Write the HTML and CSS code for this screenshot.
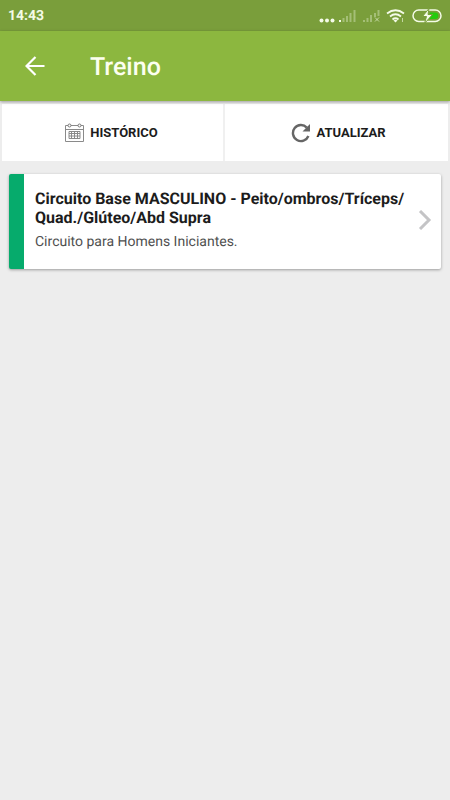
FILE: index.html
```html
<!DOCTYPE html>
<html lang="pt-BR">
<head>
<meta charset="utf-8">
<meta name="viewport" content="width=device-width, initial-scale=1">
<title>Treino</title>
<link rel="stylesheet" href="styles.css">
</head>
<body>
<div class="status">
  <time class="clock">14:43</time>
  <svg class="status-icons" width="124" height="20" viewBox="0 0 124 20" fill="#f4fbe8" aria-hidden="true">
    <circle cx="2.500" cy="14.500" r="2"/><circle cx="8" cy="14.500" r="2"/><circle cx="13.500" cy="14.500" r="2"/>
    <path d="M20 14h2v2h-2z"/>
    <path opacity=".35" d="M23.500 12h2v4h-2zM27 10h2v6h-2zM30.500 7h2v9h-2zM34.500 4h2v12h-2z"/>
    <path opacity=".35" d="M44 14h2v2h-2zM47.500 12h2v4h-2zM51 9h2v7h-2zM55 7h2v4h-2zM58.500 4h2v6h-2z"/>
    <path opacity=".6" fill="none" stroke="#f4fbe8" d="M56 11.500l4 4m0-4l-4 4"/>
    <g fill="none" stroke="#f4fbe8" stroke-width="1.800"><path d="M68 7.500q8.500-6.500 17 0M71 10.500q5.500-4.500 11 0M73.500 13.500q3-2.500 6 0"/></g>
    <path d="M74.500 14.500q2-1.500 4 0l-2 2z"/><path opacity=".6" d="M83 12h1v4h-1z"/>
    <rect x="94" y="4" width="28" height="11.500" rx="5.750" fill="none" stroke="#f4fbe8" stroke-width="1.500"/>
    <path fill="#22cc0c" d="M111 6.500h5a3.300 3.300 0 0 1 0 6.600h-6z"/>
    <path stroke="#7a9e3b" stroke-width="1" d="M110 2.500l-6.500 8h4l-2 7 8-9h-4.500z"/>
  </svg>
</div>
<header class="bar">
  <button class="back" aria-label="Voltar">
    <svg width="20" height="20" viewBox="0 0 20 20" fill="none" stroke="#fff" stroke-width="2.200"><path d="M19.500 10H2M10.500 1L1.500 10l9 9"/></svg>
  </button>
  <h1>Treino</h1>
</header>
<main>
  <nav class="tabs">
    <button class="tab">
      <svg width="20" height="20" viewBox="0 0 20 20" fill="none" stroke="#8a8a8a" aria-hidden="true">
        <path d="M.5 2.500h18v16H.5zM.5 6.500h18"/>
        <path d="M4 8.500h11v7H4zM4 10.500h11M4 13h11M6.500 8.500v7M9.500 8.500v7M12.500 8.500v7"/>
        <g fill="#fff" stroke="#777"><circle cx="4.500" cy="2.500" r="1.500"/><circle cx="14.500" cy="2.500" r="1.500"/></g>
      </svg>
      <span>HISTÓRICO</span>
    </button>
    <button class="tab">
      <svg width="20" height="20" viewBox="0 0 20 20" aria-hidden="true"><path d="M17.400 13A8 8 0 1 1 15.800 4.600" fill="none" stroke="#666" stroke-width="2.400"/><path d="M19 1v7.500h-7.500z" fill="#666"/></svg>
      <span>ATUALIZAR</span>
    </button>
  </nav>
  <a class="card" href="#treino">
    <div class="card-text">
      <h2>Circuito Base MASCULINO - Peito/ombros/Tríceps/<wbr>Quad./Glúteo/Abd Supra</h2>
      <p>Circuito para Homens Iniciantes.</p>
    </div>
    <svg width="14" height="20" viewBox="0 0 14 20" fill="none" stroke="#c4c4c6" stroke-width="3" aria-hidden="true"><path d="M2 1l9 9-9 9"/></svg>
  </a>
</main>
</body>
</html>
```
FILE: styles.css
```css
* { box-sizing: border-box; }
body {
  margin: 0;
  min-height: 100vh;
  background: #ededed;
  color: #1c1c1c;
  font-family: Roboto, "Liberation Sans", sans-serif;
  text-rendering: geometricPrecision;
}
h1, h2, p { margin: 0; }
button { border: 0; padding: 0; background: none; font: inherit; color: inherit; }
svg { display: block; flex: none; }
.status {
  display: flex;
  align-items: center;
  justify-content: space-between;
  height: 31px;
  padding: 0 7px 0 8px;
  background: #7a9e3b;
}
.clock { color: #f4fbe8; font-size: 14px; font-weight: 700; line-height: 32px; }
.bar {
  position: relative;
  display: flex;
  align-items: center;
  gap: 45px;
  height: 70px;
  padding: 0 25px;
  background: #8cb73f;
  box-shadow: 0 1px 3px rgba(0, 0, 0, .35);
}
.bar h1 { color: #fcfff0; font-size: 25px; font-weight: 500; line-height: 32px; padding-top: 4px; }
.tabs {
  display: grid;
  grid-template-columns: 1fr 1fr;
  margin: 0 2px;
  padding-top: 3px;
}
.tab {
  display: flex;
  align-items: center;
  justify-content: center;
  gap: 5px;
  height: 57px;
  background: #fff;
  font-size: 13px;
  font-weight: 700;
}
.tab:first-child { padding-right: 2px; border-right: 2px solid #f0f0f0; }
.tab:last-child { padding-left: 4px; }
.card {
  display: flex;
  align-items: center;
  margin: 13px 9px;
  padding: 15px 9px 18px 11px;
  border-left: 15px solid #06ab6c;
  border-radius: 2px;
  background: #fff;
  box-shadow: 0 1px 3px rgba(0, 0, 0, .35);
  color: inherit;
  text-decoration: none;
}
.card-text { flex: 1; }
.card h2 { font-size: 16px; font-weight: 700; line-height: 19px; }
.card p { margin-top: 6px; color: #505050; font-size: 14px; line-height: 18px; }
```
